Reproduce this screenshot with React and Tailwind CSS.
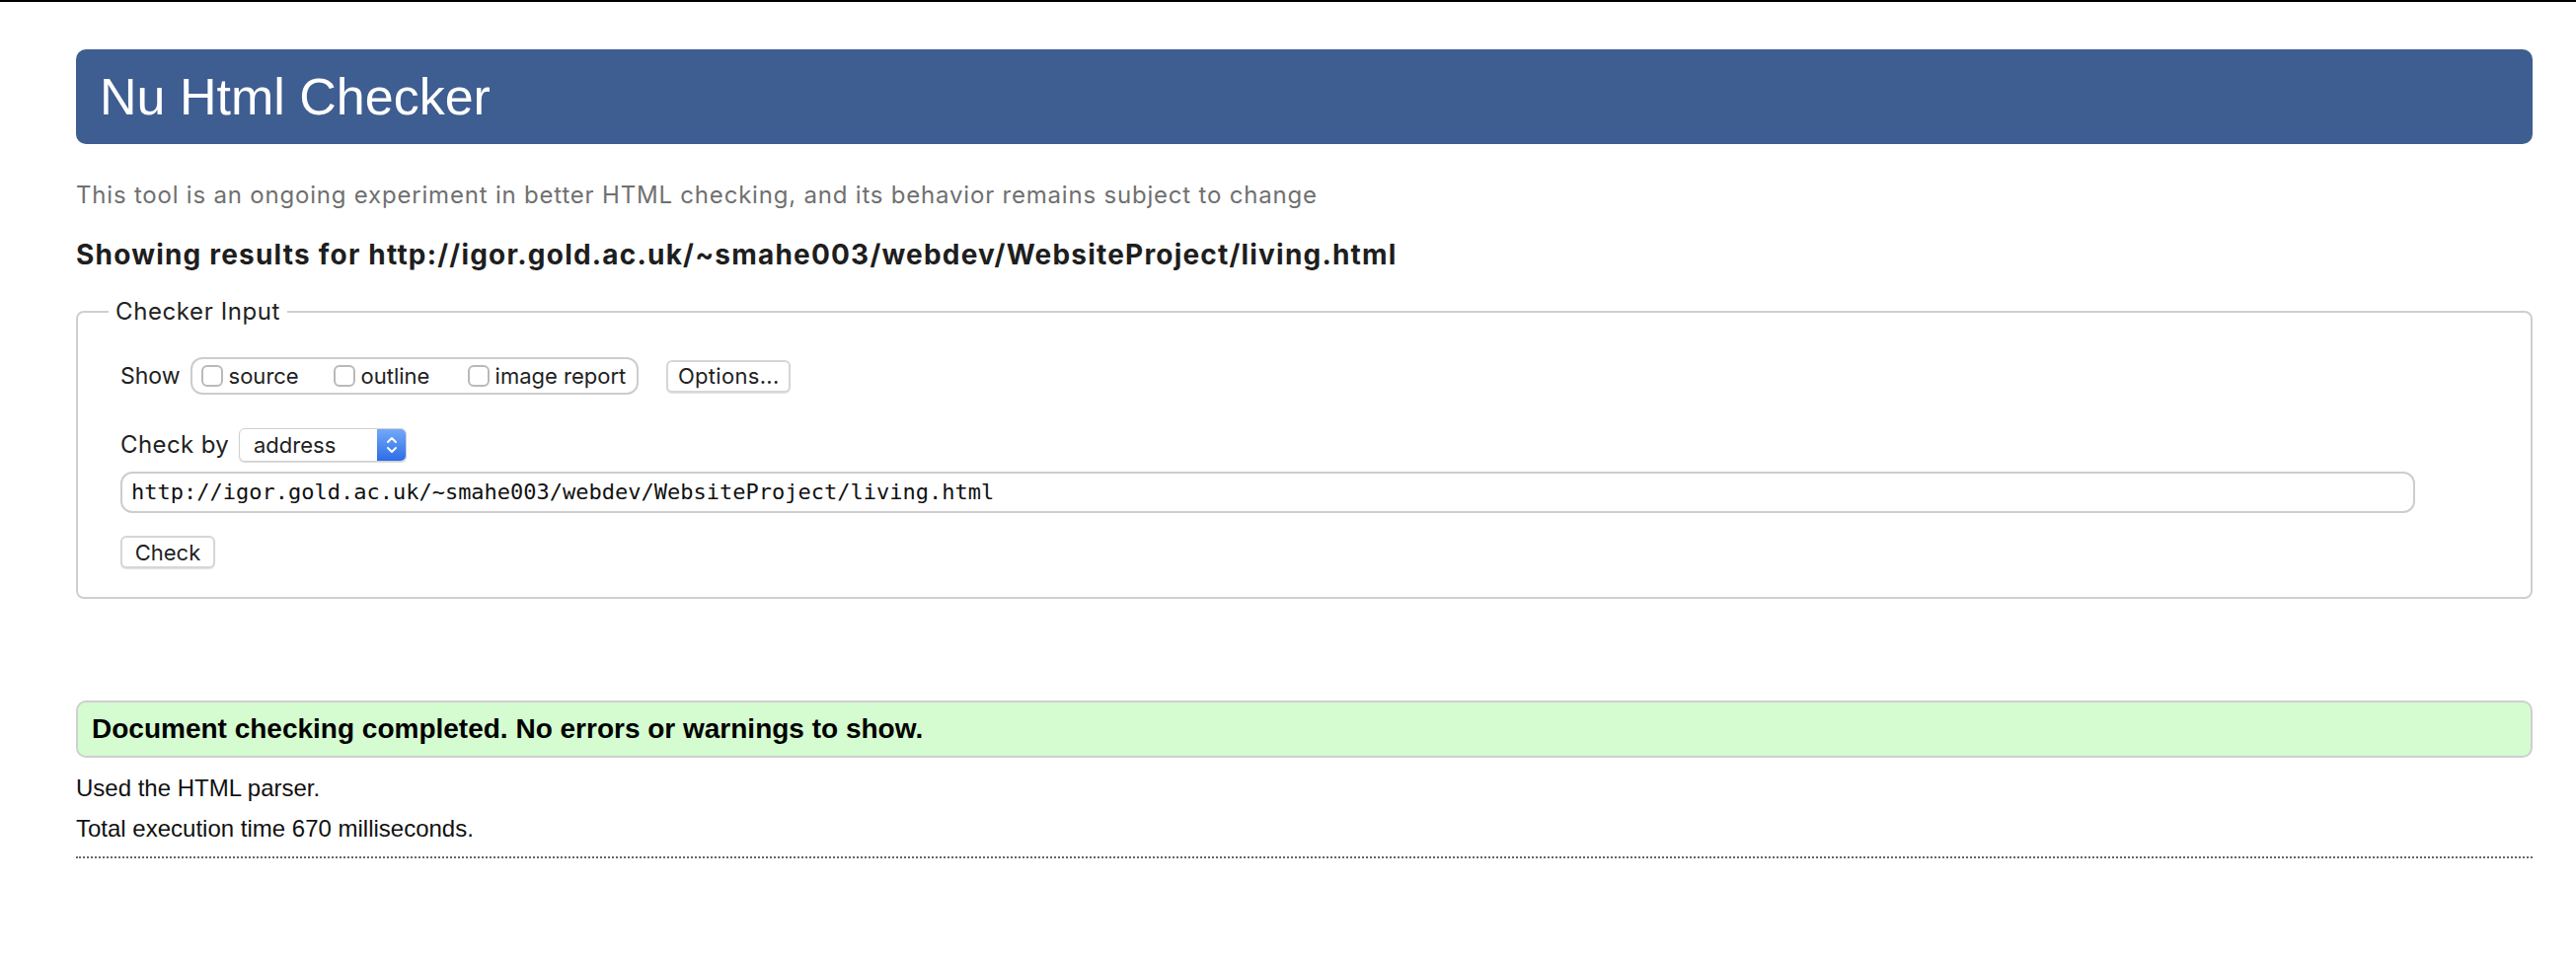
import React from 'react';

const sf = "font-['Inter',sans-serif]";

const Checkbox = ({ label, className = '' }) => (
  <label className={`flex items-center ${className}`}>
    <span className="w-[22px] h-[22px] rounded-[6px] border-2 border-[#b9b9b9] bg-white shrink-0" />
    <span className="ml-[6px] text-[22px] leading-[26px] text-[#222]">{label}</span>
  </label>
);

const SelectArrows = () => (
  <svg width="14" height="22" viewBox="0 0 14 22" fill="none">
    <path d="M3 8 L7 4 L11 8" stroke="white" strokeWidth="2" strokeLinecap="round" strokeLinejoin="round" />
    <path d="M3 14 L7 18 L11 14" stroke="white" strokeWidth="2" strokeLinecap="round" strokeLinejoin="round" />
  </svg>
);

const App = () => {
  return (
    <div className="min-h-[972px] bg-white">
      <div className="h-[2px] bg-black" />

      <div className="pl-[77px] pr-[44px]">
        {/* Title bar */}
        <div className="mt-[48px] h-[96px] rounded-[10px] bg-[#3e5d91] flex items-center pl-[24px]">
          <h1 className="font-['Liberation_Sans',Arial,sans-serif] text-[52px] leading-none text-white">
            Nu Html Checker
          </h1>
        </div>

        <p className={`${sf} mt-[37px] text-[24px] tracking-[0.8px] leading-[30px] text-[#707070]`}>
          This tool is an ongoing experiment in better HTML checking, and its behavior remains subject to change
        </p>

        <h2 className={`${sf} mt-[30px] text-[28px] tracking-[1.2px] leading-[30px] font-bold text-[#1e1e1e]`}>
          Showing results for http://igor.gold.ac.uk/~smahe003/webdev/WebsiteProject/living.html
        </h2>

        {/* Checker input */}
        <fieldset className={`${sf} mt-[28px] border-2 border-[#cfcfcf] rounded-[8px] text-[#222]`}>
          <legend className="ml-[31px] px-[7px] text-[24px] tracking-[0.6px] leading-[30px]">Checker Input</legend>

          <div className="pl-[43px] pr-[117px] pt-[31px] pb-[29px]">
            <div className="flex items-center h-[38px]">
              <span className="text-[23px] leading-[30px] mr-[10px]">Show</span>
              <div className="flex items-center h-[38px] border-2 border-[#cdcdcd] rounded-[12px] pl-[9px] pr-[11px]">
                <Checkbox label="source" className="w-[134px]" />
                <Checkbox label="outline" className="w-[136px]" />
                <Checkbox label="image report" />
              </div>
              <button className="ml-[28px] h-[33px] w-[126px] rounded-[6px] border-2 border-[#d6d6d6] bg-white shadow-[0_1px_1px_rgba(0,0,0,0.12)] text-[22px] tracking-[0.3px] leading-none text-[#222]">
                Options...
              </button>
            </div>

            <div className="flex items-center mt-[34px] h-[34px]">
              <span className="w-[120px] text-[24px] tracking-[0.4px] leading-[30px]">Check by</span>
              <div className="flex h-[34px] w-[170px] rounded-[6px] border border-[#d0d0d0] shadow-[0_1px_1px_rgba(0,0,0,0.15)] overflow-hidden bg-white">
                <span className="flex-1 flex items-center pl-[14px] text-[22px] leading-none text-[#222]">address</span>
                <span className="w-[29px] flex items-center justify-center bg-gradient-to-b from-[#74a8f8] to-[#2c6ce8]">
                  <SelectArrows />
                </span>
              </div>
            </div>

            <div className="mt-[10px] h-[42px] border-2 border-[#cdcdcd] rounded-[12px] flex items-center pl-[9px]">
              <span className="font-['DejaVu_Sans_Mono',monospace] text-[22px] leading-none text-[#111]">
                http://igor.gold.ac.uk/~smahe003/webdev/WebsiteProject/living.html
              </span>
            </div>

            <button className="mt-[23px] h-[33px] w-[96px] rounded-[6px] border-2 border-[#d6d6d6] bg-white shadow-[0_1px_1px_rgba(0,0,0,0.12)] text-[22px] leading-none text-[#222] block">
              Check
            </button>
          </div>
        </fieldset>

        {/* Result */}
        <div className="mt-[103px] h-[58px] rounded-[10px] border-2 border-[#cfcfcf] bg-[#d5fbd0] flex items-center pl-[14px]">
          <span className="font-['Liberation_Sans',Arial,sans-serif] text-[28px] leading-none font-bold text-black">
            Document checking completed. No errors or warnings to show.
          </span>
        </div>

        <div className="font-['Liberation_Sans',Arial,sans-serif] text-[24px] leading-[41px] text-[#111] mt-[10px]">
          <p>Used the HTML parser.</p>
          <p>Total execution time 670 milliseconds.</p>
        </div>

        <div className="mt-[8px] border-b-2 border-dotted border-[#666]" />
      </div>
    </div>
  );
};

export default App;
